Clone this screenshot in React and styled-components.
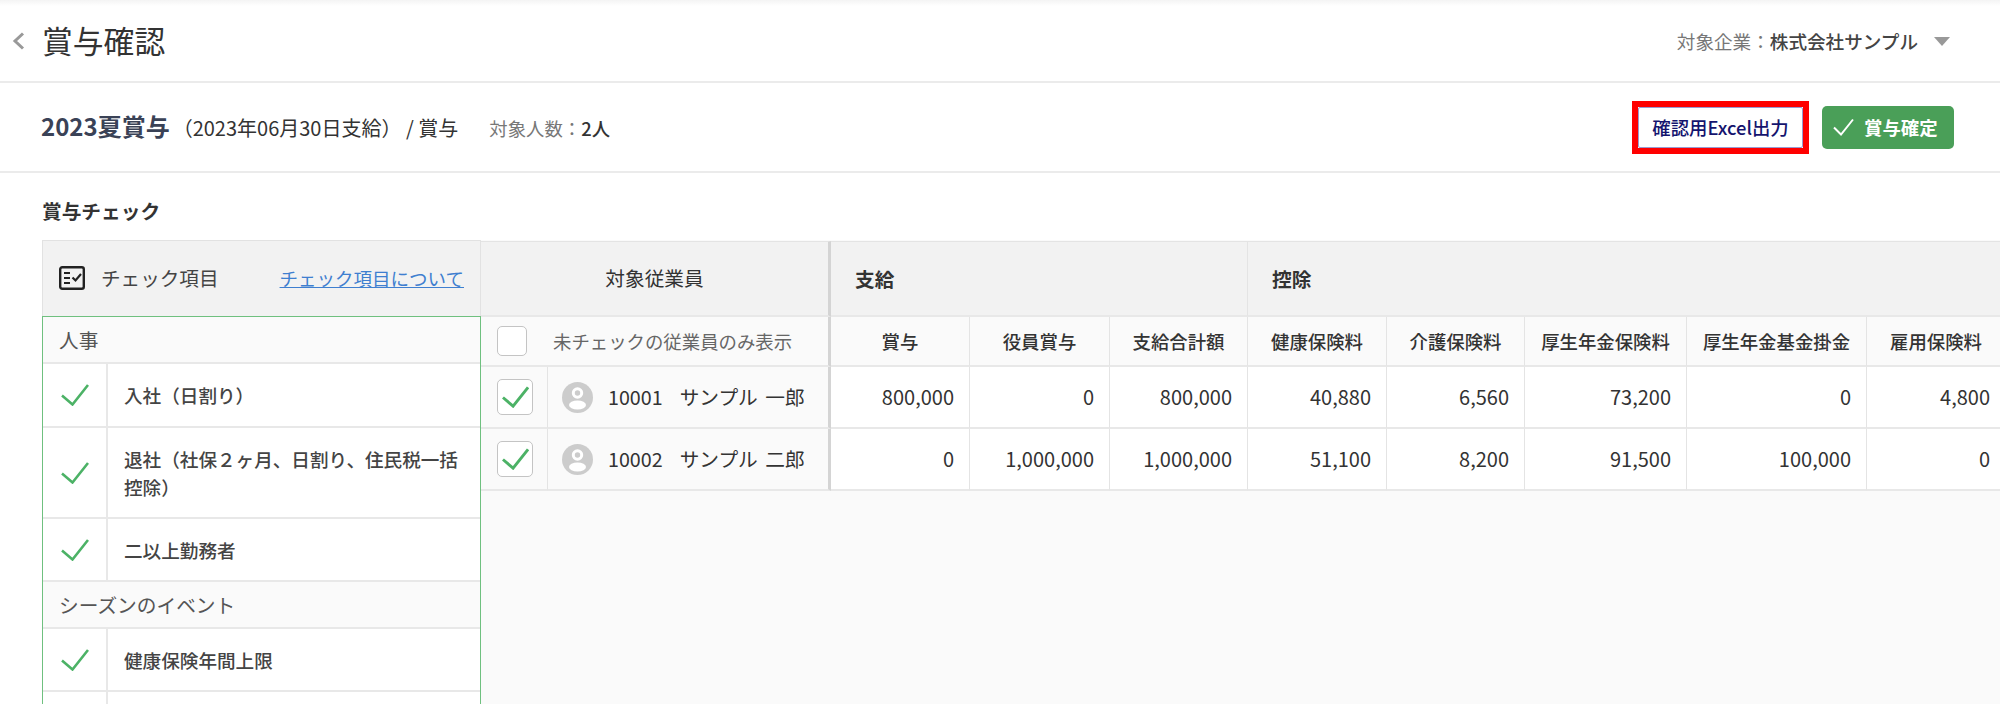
import styled, { createGlobalStyle } from 'styled-components';

const GlobalStyle = createGlobalStyle`
  html, body {
    margin: 0;
    padding: 0;
    background: #fff;
    color: #333;
    font-family: "Noto Sans CJK JP", "Noto Sans", sans-serif;
  }
  * { box-sizing: border-box; }
`;

const Page = styled.div`
  width: 2000px;
  height: 704px;
  overflow: hidden;
  display: flex;
  flex-direction: column;
`;

const TopBar = styled.header`
  height: 83px;
  flex: none;
  padding: 0 50px 0 12px;
  display: flex;
  align-items: center;
  justify-content: space-between;
  border-bottom: 2px solid #ebebeb;
  background: linear-gradient(#f4f4f4, #fff 6px);
`;

const TitleGroup = styled.div`
  display: flex;
  align-items: center;
  gap: 17px;
`;

const Title = styled.h1`
  margin: 0 0 2px;
  font-size: 30.8px;
  font-weight: 400;
  line-height: 40px;
  color: #333;
`;

const CompanySelect = styled.div`
  display: flex;
  align-items: center;
  gap: 16px;
  font-size: 18.6px;
  color: #777;

  b {
    font-weight: 500;
    color: #444;
  }
`;

const Caret = styled.span`
  width: 0;
  height: 0;
  margin-top: 2px;
  border-left: 8px solid transparent;
  border-right: 8px solid transparent;
  border-top: 9px solid #999;
`;

const SummaryBar = styled.div`
  height: 90px;
  flex: none;
  padding: 0 46px 0 41px;
  display: flex;
  align-items: center;
  justify-content: space-between;
  border-bottom: 2px solid #ebebeb;
`;

const SummaryText = styled.div`
  display: flex;
  align-items: baseline;
  padding-bottom: 4px;
  font-size: 20px;
  color: #333;
`;

const BonusName = styled.strong`
  font-size: 24px;
  font-weight: 700;
  color: #3a4256;
  margin-right: 3px;
`;

const Headcount = styled.span`
  margin-left: 31px;
  font-size: 18.4px;
  color: #777;

  b {
    font-weight: 500;
    color: #333;
  }
`;

const Actions = styled.div`
  display: flex;
  align-items: center;
  gap: 13px;
`;

const HighlightFrame = styled.div`
  border: 6px solid #f00;
  display: flex;
`;

const ExportButton = styled.button`
  width: 165px;
  height: 41px;
  padding: 0;
  border: 1px solid #9a9ad0;
  border-radius: 2px;
  background: #fff;
  color: #14146e;
  font: 500 18.4px "Noto Sans CJK JP", sans-serif;
`;

const ConfirmButton = styled.button`
  width: 132px;
  height: 43px;
  padding: 0 0 0 11px;
  border: 0;
  border-radius: 5px;
  background: #4a9f58;
  color: #fff;
  font: 700 18.4px "Noto Sans CJK JP", sans-serif;
  display: flex;
  align-items: center;
  gap: 10px;
`;

const SectionTitle = styled.h2`
  margin: 0;
  height: 67px;
  flex: none;
  padding: 8px 0 0 42px;
  display: flex;
  align-items: center;
  font-size: 19.7px;
  font-weight: 700;
  color: #333;
`;

const Workspace = styled.div`
  flex: 1;
  min-height: 0;
  padding-left: 42px;
  display: flex;
`;

const CheckPanel = styled.aside`
  width: 439px;
  flex: none;
`;

const PanelHead = styled.div`
  height: 76px;
  padding: 0 16px 2px 16px;
  display: flex;
  align-items: center;
  background: #f2f2f2;
  border: 1px solid #e2e2e2;
  border-bottom: 0;
  font-size: 19.6px;
  color: #444;
`;

const PanelLabel = styled.span`
  margin-left: 16px;
  flex: 1;
`;

const HelpLink = styled.a`
  font-size: 18.5px;
  color: #3f7fd0;
  text-decoration: underline;
`;

const CheckList = styled.div`
  border: 1px solid #6fc07f;
  border-bottom: 0;
  height: 100%;
`;

const GroupRow = styled.div`
  height: 47px;
  padding-left: 16px;
  display: flex;
  align-items: center;
  background: #fafafa;
  border-bottom: 2px solid #e8e8e8;
  font-size: 19.7px;
  color: #555;
`;

const CheckRow = styled.div`
  height: ${(p) => p.$height}px;
  display: flex;
  border-bottom: 2px solid #e8e8e8;
`;

const CheckMark = styled.div`
  width: 65px;
  flex: none;
  display: flex;
  align-items: center;
  justify-content: center;
  border-right: 2px solid #e8e8e8;
`;

const CheckLabel = styled.div`
  padding: 0 16px;
  display: flex;
  align-items: center;
  font-size: 18.6px;
  font-weight: 500;
  line-height: 28px;
  color: #444;
`;

const EmployeeTable = styled.section`
  flex: 1;
  min-width: 0;
  padding-top: 1px;
  background: #fafafa;
  overflow: hidden;
`;

const Grid = styled.div`
  width: 1526px;
  display: grid;
  grid-template-columns: 67px 283px 139px 140px 138px 139px 138px 162px 180px 139px;
  grid-template-rows: 76px 50px 62px 62px;
`;

const Cell = styled.div`
  display: flex;
  align-items: center;
  min-width: 0;
  border-right: 1px solid #e4e4e4;
  border-bottom: 2px solid #e8e8e8;
`;

const GroupHead = styled(Cell)`
  grid-column: span ${(p) => p.$span};
  justify-content: ${(p) => (p.$center ? 'center' : 'flex-start')};
  padding-left: ${(p) => (p.$center ? 0 : 24)}px;
  padding-bottom: ${(p) => (p.$center ? 2 : 0)}px;
  background: #f2f2f2;
  border-top: 1px solid #e4e4e4;
  border-right-width: ${(p) => (p.$thick ? 3 : 1)}px;
  border-right-color: ${(p) => (p.$thick ? '#d4d4d4' : '#e4e4e4')};
  font-size: 19.7px;
  font-weight: ${(p) => (p.$center ? 400 : 700)};
  color: #333;
`;

const FilterCell = styled(Cell)`
  grid-column: span 2;
  padding-left: 16px;
  gap: 26px;
  border-right: 3px solid #d4d4d4;
  font-size: 18.4px;
  color: #666;
`;

const ColumnHead = styled(Cell)`
  justify-content: center;
  font-size: 18.4px;
  font-weight: 500;
  color: #333;
`;

const TickCell = styled(Cell)`
  padding-left: 16px;
`;

const NameCell = styled(Cell)`
  padding-left: 14px;
  border-right: 3px solid #d4d4d4;
  font-size: 19.7px;
  color: #333;
`;

const EmployeeId = styled.span`
  margin: 0 17px 2px 15px;
`;

const EmployeeName = styled.span`
  margin-bottom: 2px;
  word-spacing: 3px;
`;

const AmountCell = styled(Cell)`
  justify-content: flex-end;
  padding: 0 15px 2px 0;
  background: #fff;
  font-size: 20px;
  color: #333;
`;

const Box = styled.span`
  width: ${(p) => p.$size}px;
  height: ${(p) => p.$size}px;
  flex: none;
  display: flex;
  align-items: center;
  justify-content: center;
  background: #fff;
  border: 1px solid #c4c4c4;
  border-radius: 5px;
`;

const Tick = ({ width = 28, height = 22, strokeWidth = 2.6 }) => (
  <svg width={width} height={height} viewBox="0 0 28 22" fill="none">
    <path d="M1 11.5 L11.5 20.5 L27 1" stroke="#4cb266" strokeWidth={strokeWidth} />
  </svg>
);

const ChecklistIcon = () => (
  <svg width="26" height="24" viewBox="0 0 26 24" fill="none" stroke="#222">
    <rect x="1.2" y="1.2" width="23.6" height="21.6" rx="2" strokeWidth="2.4" />
    <path d="M5 7h6M5 12h6M5 17h6" strokeWidth="2" />
    <path d="M13.5 11.5l3 3 5.5-6.5" strokeWidth="2.2" />
  </svg>
);

const Avatar = () => (
  <svg width="31" height="31" viewBox="0 0 31 31">
    <circle cx="15.5" cy="15.5" r="15.5" fill="#ccc" />
    <circle cx="15.5" cy="11" r="4.2" fill="#ccc" stroke="#fff" strokeWidth="3" />
    <ellipse cx="15.5" cy="23" rx="8.5" ry="4.5" fill="#fff" />
  </svg>
);

const checkSections = [
  {
    name: '人事',
    items: [
      { label: '入社（日割り）', height: 64 },
      { label: '退社（社保２ヶ月、日割り、住民税一括控除）', height: 91 },
      { label: '二以上勤務者', height: 63 },
    ],
  },
  {
    name: 'シーズンのイベント',
    items: [
      { label: '健康保険年間上限', height: 63 },
      { label: '', height: 63 },
    ],
  },
];

const columns = ['賞与', '役員賞与', '支給合計額', '健康保険料', '介護保険料', '厚生年金保険料', '厚生年金基金掛金', '雇用保険料'];

const employees = [
  {
    id: '10001',
    name: 'サンプル 一郎',
    amounts: ['800,000', '0', '800,000', '40,880', '6,560', '73,200', '0', '4,800'],
  },
  {
    id: '10002',
    name: 'サンプル 二郎',
    amounts: ['0', '1,000,000', '1,000,000', '51,100', '8,200', '91,500', '100,000', '0'],
  },
];

export default function App() {
  return (
    <Page>
      <GlobalStyle />
      <TopBar>
        <TitleGroup>
          <svg width="13" height="18" viewBox="0 0 13 18" fill="none">
            <path d="M11 1.5 L3 9 L11 16.5" stroke="#999" strokeWidth="3" />
          </svg>
          <Title>賞与確認</Title>
        </TitleGroup>
        <CompanySelect>
          <span>対象企業：<b>株式会社サンプル</b></span>
          <Caret />
        </CompanySelect>
      </TopBar>

      <SummaryBar>
        <SummaryText>
          <BonusName>2023夏賞与</BonusName>
          <span>（2023年06月30日支給） / 賞与</span>
          <Headcount>対象人数：<b>2人</b></Headcount>
        </SummaryText>
        <Actions>
          <HighlightFrame>
            <ExportButton>確認用Excel出力</ExportButton>
          </HighlightFrame>
          <ConfirmButton>
            <svg width="21" height="18" viewBox="0 0 21 18" fill="none">
              <path d="M1 9.5 L8 16.5 L20 1.5" stroke="#fff" strokeWidth="2" />
            </svg>
            賞与確定
          </ConfirmButton>
        </Actions>
      </SummaryBar>

      <SectionTitle>賞与チェック</SectionTitle>

      <Workspace>
        <CheckPanel>
          <PanelHead>
            <ChecklistIcon />
            <PanelLabel>チェック項目</PanelLabel>
            <HelpLink>チェック項目について</HelpLink>
          </PanelHead>
          <CheckList>
            {checkSections.map((section) => (
              <div key={section.name}>
                <GroupRow>{section.name}</GroupRow>
                {section.items.map((item, i) => (
                  <CheckRow key={i} $height={item.height}>
                    <CheckMark>{item.label && <Tick />}</CheckMark>
                    <CheckLabel>{item.label}</CheckLabel>
                  </CheckRow>
                ))}
              </div>
            ))}
          </CheckList>
        </CheckPanel>

        <EmployeeTable>
          <Grid>
            <GroupHead $span={2} $center $thick>対象従業員</GroupHead>
            <GroupHead $span={3}>支給</GroupHead>
            <GroupHead $span={5}>控除</GroupHead>

            <FilterCell>
              <Box $size={30} />
              未チェックの従業員のみ表示
            </FilterCell>
            {columns.map((col) => (
              <ColumnHead key={col}>{col}</ColumnHead>
            ))}

            {employees.map((emp) => [
              <TickCell key={emp.id + 'tick'}>
                <Box $size={36}>
                  <Tick width={27} height={22} strokeWidth={3} />
                </Box>
              </TickCell>,
              <NameCell key={emp.id}>
                <Avatar />
                <EmployeeId>{emp.id}</EmployeeId>
                <EmployeeName>{emp.name}</EmployeeName>
              </NameCell>,
              ...emp.amounts.map((amount, i) => (
                <AmountCell key={emp.id + i}>{amount}</AmountCell>
              )),
            ])}
          </Grid>
        </EmployeeTable>
      </Workspace>
    </Page>
  );
}
